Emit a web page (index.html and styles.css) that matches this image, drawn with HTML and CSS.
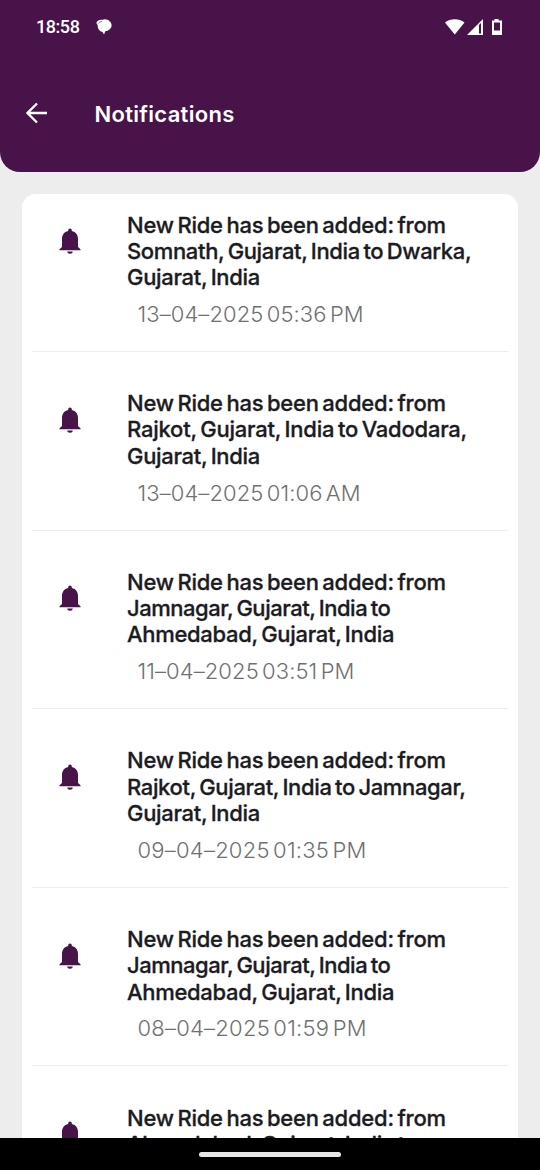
FILE: index.html
```html
<!DOCTYPE html>
<html lang="en">
<head>
<meta charset="utf-8">
<title>Notifications</title>
<link rel="stylesheet" href="styles.css">
</head>
<body>
<svg class="defs" width="0" height="0"><symbol id="bell" viewBox="0 0 22 26"><path d="M11 .5a1.800 1.800 0 0 1 1.800 1.800v.7c4 .8 6.200 4 6.200 8v8l2.500 2.200v1H.5v-1L3 19v-8c0-4 2.200-7.200 6.200-8v-.7A1.800 1.800 0 0 1 11 .5zM8.300 23.500h5.400a2.700 2.200 0 0 1-5.400 0z"/></symbol></svg>
<div class="screen">
  <header class="header">
    <div class="status">
      <span class="clock">18:58</span>
      <svg class="chat" width="16" height="16" viewBox="0 0 16 16"><path d="M.3 4C1.200 1.300 4 .6 6 .9 9-.2 12 .5 13.500 2.200 16.300 4 16.300 8.500 13.500 10.500c-1.300 1-3 1.500-4.200 1.700L8 15.500 6.500 13C3.500 12.500 1.500 10 1.600 6z"/><path class="crease" d="M2 4.600C3 3.300 4.300 2.600 6 2.500"/></svg>
      <svg class="signals" width="60" height="19" viewBox="0 0 60 19"><path d="M0 4.500C5.500.3 14 .3 19.500 4.500L9.750 16.500z"/><path fill-rule="evenodd" d="M22 17 38 1v16zm12-10V15.500h2V5z"/><path fill-rule="evenodd" d="M49.500 1h4v1.500H57V17H47V2.500h2.500zM49 4.500v8h6v-8z"/></svg>
    </div>
    <div class="toolbar">
      <svg class="back" width="22" height="22" viewBox="0 0 22 22"><path d="M21 11H2M11 1.500 1.500 11l9.500 9.500"/></svg>
      <h1>Notifications</h1>
    </div>
  </header>
  <main class="card">
    <article class="item"><svg class="bell"><use href="#bell"/></svg><div class="body"><p><span class="lead">New Ride has been added: from</span><span class="snug">Somnath, Gujarat, India to Dwarka,</span><span>Gujarat, India</span></p><time>13–04–2025 05:36 PM</time></div></article>
    <article class="item"><svg class="bell"><use href="#bell"/></svg><div class="body"><p><span class="lead">New Ride has been added: from</span><span class="lead">Rajkot, Gujarat, India to Vadodara,</span><span>Gujarat, India</span></p><time>13–04–2025 01:06 AM</time></div></article>
    <article class="item"><svg class="bell"><use href="#bell"/></svg><div class="body"><p><span class="lead">New Ride has been added: from</span><span class="tight">Jamnagar, Gujarat, India to</span><span>Ahmedabad, Gujarat, India</span></p><time>11–04–2025 03:51 PM</time></div></article>
    <article class="item"><svg class="bell"><use href="#bell"/></svg><div class="body"><p><span class="lead">New Ride has been added: from</span><span class="snug">Rajkot, Gujarat, India to Jamnagar,</span><span>Gujarat, India</span></p><time class="wide">09–04–2025 01:35 PM</time></div></article>
    <article class="item"><svg class="bell"><use href="#bell"/></svg><div class="body"><p><span class="lead">New Ride has been added: from</span><span class="tight">Jamnagar, Gujarat, India to</span><span>Ahmedabad, Gujarat, India</span></p><time class="wide">08–04–2025 01:59 PM</time></div></article>
    <article class="item"><svg class="bell"><use href="#bell"/></svg><div class="body"><p><span class="lead">New Ride has been added: from</span><span>Ahmedabad, Gujarat, India to</span></p></div></article>
  </main>
  <footer class="navbar"><div class="handle"></div></footer>
</div>
</body>
</html>
```
FILE: styles.css
```css
* { box-sizing: border-box; }
body { margin: 0; background: #ededed; font-family: Inter, "Open Sans", sans-serif; }
.defs { display: block; height: 0; }
.screen { width: 540px; height: 1170px; display: flex; flex-direction: column; overflow: hidden; }
.header { height: 172px; flex: none; background: #481349; color: #fff; border-radius: 0 0 20px 20px; }
.status { height: 54px; padding: 0 36px; display: flex; align-items: center; }
.clock { font: 500 18px/20px Roboto, sans-serif; letter-spacing: -.45px; width: 60px; }
.chat, .signals { fill: #fff; }
.crease { fill: none; stroke: #481349; stroke-width: .6; }
.signals { margin-left: auto; margin-right: -1px; }
.toolbar { height: 118px; padding-left: 26px; display: flex; align-items: center; }
.back { fill: none; stroke: #fff; stroke-width: 2.300; }
h1 { margin: 2px 0 0 46.500px; font-size: 22px; line-height: 28px; font-weight: 600; letter-spacing: .3px; }
.card { flex: 1; min-height: 0; overflow: hidden; margin: 22px 22.500px 0 22px; padding: 0 10px; background: #fff; border-radius: 14px 14px 0 0; }
.item { height: 178.600px; padding: 38.200px 0 0 26.500px; display: flex; border-bottom: 1px solid #ededed; }
.item:first-child { height: 158px; padding-top: 17.600px; }
.bell { flex: none; width: 22px; height: 26px; margin-top: 16.600px; fill: #481349; }
.body { margin-left: 46.500px; }
p { margin: 0; color: #1c1b1f; font-size: 22px; line-height: 26.300px; font-weight: 500; word-spacing: -2px; letter-spacing: -.31px; -webkit-text-stroke: .3px #1c1b1f; }
p span { display: block; white-space: nowrap; }
.lead { letter-spacing: -.23px; }
.snug { letter-spacing: -.355px; }
.tight { letter-spacing: -.46px; }
time { display: block; margin: 9.500px 0 0 10.500px; color: #707070; font-size: 22px; line-height: 28px; font-weight: 300; word-spacing: -3px; letter-spacing: .09px; white-space: nowrap; }
.wide { letter-spacing: .23px; }
.navbar { height: 32px; flex: none; background: #000; display: flex; justify-content: center; align-items: center; }
.handle { width: 142px; height: 5px; border-radius: 3px; background: #e6e6e6; }
```
